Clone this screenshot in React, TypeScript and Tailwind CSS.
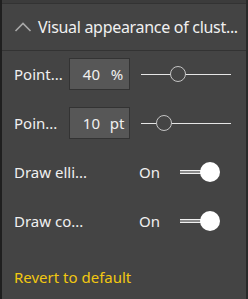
import React from 'react';

function Chevron() {
  return (
    <svg width="18" height="10" viewBox="0 0 18 10" className="shrink-0">
      <path d="M1.5 9 L9 1.5 L16.5 9" fill="none" stroke="#a8a8a8" strokeWidth="1.6" />
    </svg>
  );
}

function Slider({ pos }: { pos: number }) {
  return (
    <div className="relative h-[32px] w-[90px] flex items-center">
      <div className="h-px w-full bg-[#e6e6e6]" />
      <div
        className="absolute top-1/2 h-[16px] w-[16px] -translate-x-1/2 -translate-y-1/2 rounded-full border-[1.5px] border-[#c4c4c4] bg-[#454545]"
        style={{ left: pos }}
      />
    </div>
  );
}

function NumberBox({ value, unit }: { value: string; unit: string }) {
  return (
    <div className="flex h-[32px] w-[61px] items-center border border-[#333] bg-[#575757] text-[15px] text-[#f0f0f0]">
      <span className="w-[30px] text-right">{value}</span>
      <span className="ml-[5px] w-[24px] text-center">{unit}</span>
    </div>
  );
}

function Toggle() {
  return (
    <div className="relative h-[32px] w-[44px]">
      <div className="absolute left-0 top-1/2 h-[4px] w-[32px] -translate-y-1/2 border-y border-[#f0f0f0] bg-[#8a8a8a]" />
      <div className="absolute left-[20px] top-1/2 h-[20px] w-[20px] -translate-y-1/2 rounded-full bg-white" />
    </div>
  );
}

export default function App() {
  return (
    <div
      className="flex h-[299px] w-[248px] flex-col border-l-2 border-r-2 border-l-[#1f1f1f] border-r-[#2a2a2a] bg-[#444444] text-[#f0f0f0]"
      style={{ fontFamily: '"Noto Sans", "Open Sans", sans-serif' }}
    >
      <div className="h-[3px] bg-[#3c3c3c]" />
      {/* header */}
      <div className="flex h-[48px] items-center gap-[6px] border-y border-[#333] pl-[12px] text-[16px] tracking-[-0.3px]">
        <Chevron />
        <span className="whitespace-nowrap">Visual appearance of clust...</span>
      </div>

      {/* body */}
      <div className="flex flex-col gap-[17px] pl-[12px] pt-[7px] text-[15px]">
        <div className="flex items-center">
          <span className="w-[55px]">Point...</span>
          <NumberBox value="40" unit="%" />
          <div className="ml-[11px]">
            <Slider pos={37} />
          </div>
        </div>
        <div className="flex items-center">
          <span className="w-[55px]">Poin...</span>
          <NumberBox value="10" unit="pt" />
          <div className="ml-[11px]">
            <Slider pos={23} />
          </div>
        </div>
        <div className="flex h-[32px] items-center">
          <span className="w-[125px]">Draw elli...</span>
          <span className="w-[41px]">On</span>
          <Toggle />
        </div>
        <div className="flex h-[32px] items-center">
          <span className="w-[125px]">Draw co...</span>
          <span className="w-[41px]">On</span>
          <Toggle />
        </div>
      </div>

      <div className="mt-[30px] pl-[12px] text-[15px] leading-[20px] text-[#f2c811]">Revert to default</div>
    </div>
  );
}
